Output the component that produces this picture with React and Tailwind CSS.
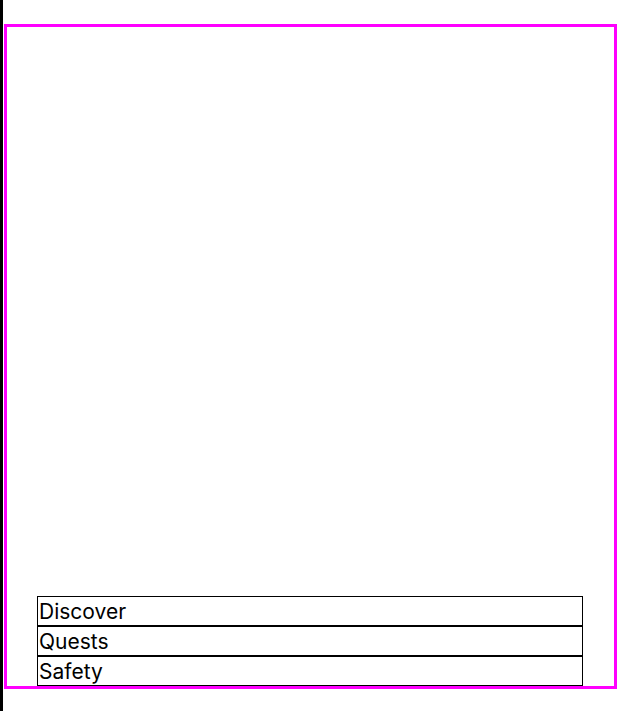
import React from 'react';

const tabs = ['Discover', 'Quests', 'Safety'];

const App = () => {
  return (
    <div className="flex h-[711px] w-[617px] bg-white" style={{ fontFamily: 'Inter, "Liberation Sans", Arial, sans-serif' }}>
      {/* left edge bar */}
      <div className="w-[3px] h-full bg-black shrink-0"></div>
      <div className="flex-1 pl-[1px] pt-[24px]">
        <div className="h-[665px] border-[3px] border-[#ff00ff] flex flex-col justify-end pl-[30px] pr-[31px]">
          {tabs.map((tab) => (
            <div key={tab} className="border border-black text-[21px] leading-[26px] pt-[2px] text-black pl-[1px]">
              {tab}
            </div>
          ))}
        </div>
      </div>
    </div>
  );
};

export default App;
